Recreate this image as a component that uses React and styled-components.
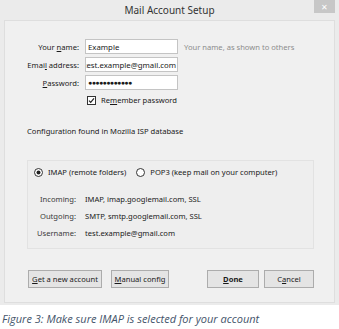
import React from "react";
import styled, { createGlobalStyle } from "styled-components";

const Global = createGlobalStyle`
  html, body {
    margin: 0;
    padding: 0;
    background: #ffffff;
  }
  body {
    font-family: "Noto Sans", "Open Sans", sans-serif;
  }
`;

// the whole dialog window
const Window = styled.div`
  width: 339px;
  height: 305px;
  box-sizing: border-box;
  background: #ebebeb;
  padding: 0 4px 2px 4px;
  display: flex;
  flex-direction: column;
`;

const TitleBar = styled.div`
  height: 20px;
  position: relative;
  display: flex;
  align-items: center;
  justify-content: center;
  font-size: 10px;
  color: #333;
`;

const CloseBtn = styled.div`
  position: absolute;
  right: 0;
  top: 0;
  width: 21px;
  height: 13px;
  background: #c7c7c7;
  color: #fff;
  font-size: 8px;
  display: flex;
  align-items: center;
  justify-content: center;
`;

const Panel = styled.div`
  flex: 1;
  background: #f0f0f0;
  border: 1px solid #dedede;
  display: flex;
  flex-direction: column;
  padding: 18px 0 0 0;
  font-size: 7.6px;
  color: #1a1a1a;
`;

const FormGrid = styled.div`
  display: grid;
  grid-template-columns: 74px 93px auto;
  column-gap: 6px;
  row-gap: 3px;
  align-items: center;
`;

const Label = styled.label`
  text-align: right;
  color: #1a1a1a;
`;

const Input = styled.div`
  height: 15px;
  box-sizing: border-box;
  background: #fff;
  border: 1px solid #c4c4c4;
  display: flex;
  align-items: center;
  justify-content: ${(p) => (p.end ? "flex-end" : "flex-start")};
  padding: 0 1px 0 2px;
  overflow: hidden;
  white-space: nowrap;
  letter-spacing: ${(p) => (p.dots ? "-0.6px" : "0")};
  font-size: ${(p) => (p.dots ? "7px" : "7.8px")};
`;

const Hint = styled.span`
  color: #8c8c8c;
`;

const CheckRow = styled.div`
  display: flex;
  align-items: center;
  gap: 5px;
  margin: 5px 0 0 82px;
`;

const Info = styled.div`
  margin: 21px 0 0 22px;
`;

const Group = styled.div`
  margin: 24px 20px 0 22px;
  height: 89px;
  box-sizing: border-box;
  border: 1px solid #e2e2e2;
  background: #eeeeee;
  padding: 6px 0 0 6px;
  display: flex;
  flex-direction: column;
`;

const RadioRow = styled.div`
  display: flex;
  align-items: center;
  gap: 10px;
`;

const RadioOpt = styled.div`
  display: flex;
  align-items: center;
  gap: 5px;
`;

const Details = styled.div`
  margin-top: 17px;
  display: grid;
  grid-template-columns: 42px auto;
  column-gap: 9px;
  row-gap: 7px;
`;

const DLabel = styled.span`
  text-align: right;
  color: #3a3a3a;
`;

const ButtonBar = styled.div`
  margin: 21px 0 0 23px;
  display: flex;
  align-items: center;
`;

const Button = styled.div`
  height: 18px;
  box-sizing: border-box;
  width: ${(p) => p.w}px;
  margin-left: ${(p) => p.ml || 0}px;
  border: 1px solid #acacac;
  background: #e4e4e4;
  display: flex;
  align-items: center;
  justify-content: center;
  font-weight: ${(p) => (p.bold ? 700 : 400)};
`;

const Caption = styled.div`
  margin: 6px 0 0 2px;
  font-family: "Open Sans", sans-serif;
  font-style: italic;
  font-size: 11px;
  color: #44546a;
`;

function Check() {
  return (
    <svg width="9" height="9" viewBox="0 0 9 9">
      <rect x="0.5" y="0.5" width="8" height="8" fill="#fff" stroke="#333" />
      <path d="M2 4.6 L3.7 6.3 L7 2.4" fill="none" stroke="#222" strokeWidth="1.2" />
    </svg>
  );
}

function Radio({ on }) {
  return (
    <svg width="9" height="9" viewBox="0 0 9 9">
      <circle cx="4.5" cy="4.5" r="4" fill="#fff" stroke="#333" />
      {on && <circle cx="4.5" cy="4.5" r="2" fill="#222" />}
    </svg>
  );
}

export default function App() {
  return (
    <>
      <Global />
      <Window>
        <TitleBar>
          Mail Account Setup
          <CloseBtn>✕</CloseBtn>
        </TitleBar>
        <Panel>
          <FormGrid>
            <Label>
              Your <u>n</u>ame:
            </Label>
            <Input>Example</Input>
            <Hint>Your name, as shown to others</Hint>
            <Label>
              Emai<u>l</u> address:
            </Label>
            <Input end>test.example@gmail.com</Input>
            <span />
            <Label>
              <u>P</u>assword:
            </Label>
            <Input dots>●●●●●●●●●●●●</Input>
            <span />
          </FormGrid>
          <CheckRow>
            <Check />
            <span>
              Re<u>m</u>ember password
            </span>
          </CheckRow>
          <Info>Configuration found in Mozilla ISP database</Info>
          <Group>
            <RadioRow>
              <RadioOpt>
                <Radio on />
                IMAP (remote folders)
              </RadioOpt>
              <RadioOpt>
                <Radio />
                POP3 (keep mail on your computer)
              </RadioOpt>
            </RadioRow>
            <Details>
              <DLabel>Incoming:</DLabel>
              <span>IMAP, imap.googlemail.com, SSL</span>
              <DLabel>Outgoing:</DLabel>
              <span>SMTP, smtp.googlemail.com, SSL</span>
              <DLabel>Username:</DLabel>
              <span>test.example@gmail.com</span>
            </Details>
          </Group>
          <ButtonBar>
            <Button w={74}>
              <span>
                <u>G</u>et a new account
              </span>
            </Button>
            <Button w={58} ml={9}>
              <span>
                <u>M</u>anual config
              </span>
            </Button>
            <Button w={52} ml={38} bold>
              <span>
                <u>D</u>one
              </span>
            </Button>
            <Button w={50} ml={5}>
              <span>
                C<u>a</u>ncel
              </span>
            </Button>
          </ButtonBar>
        </Panel>
      </Window>
      <Caption>Figure 3: Make sure IMAP is selected for your account</Caption>
    </>
  );
}
